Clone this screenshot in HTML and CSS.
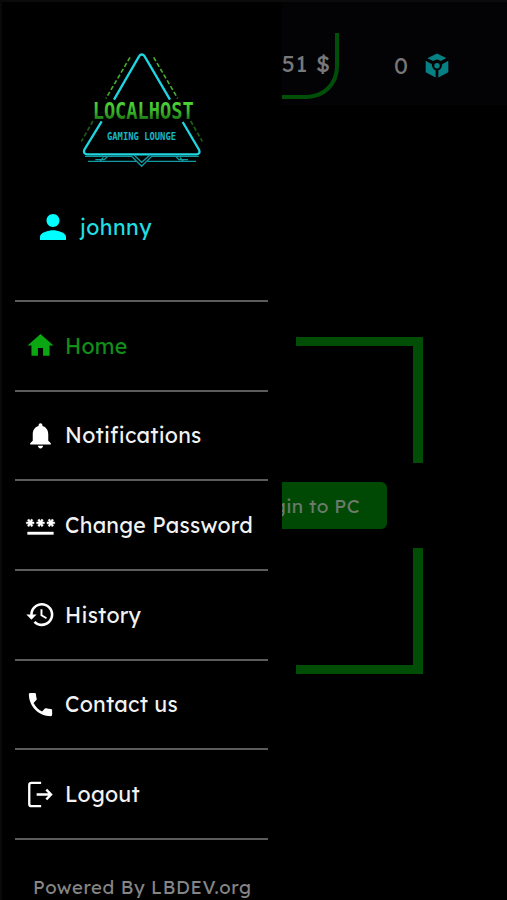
FILE: index.html
```html
<!DOCTYPE html>
<html lang="en">
<head>
<meta charset="utf-8">
<meta name="viewport" content="width=device-width, initial-scale=1">
<title>Localhost Gaming Lounge</title>
<link rel="stylesheet" href="styles.css">
</head>
<body>
<div class="app">
  <header class="topbar">
    <div class="balance">51 $</div>
    <div class="points">
      <span>0</span>
      <svg class="cube" viewBox="0 0 70 72">
        <path class="cube-body" d="M35 1 62 14 46 23Q35 14 24 23L7 15ZM2 22 20 32Q20 45 31 50V71L2 56ZM68 22 50 32Q50 45 39 50V71L68 56Z"/>
        <circle class="cube-body" cx="35" cy="37" r="8"/>
      </svg>
    </div>
  </header>
  <main class="stage">
    <div class="frame">
      <div class="corner top left"></div>
      <div class="corner top right"></div>
      <button class="login">Login to PC</button>
      <div class="corner bottom left"></div>
      <div class="corner bottom right"></div>
    </div>
  </main>
</div>

<aside class="drawer">
  <div class="brand">
    <svg class="logo" viewBox="0 0 435 405">
      <defs>
        <linearGradient id="lime" x1="0" y1="0" x2="0" y2="1">
          <stop offset="0" stop-color="#5be03f"/>
          <stop offset=".55" stop-color="#36b327"/>
          <stop offset="1" stop-color="#0b4e0b"/>
        </linearGradient>
      </defs>
      <g class="neon">
        <path d="M132 179 207 49Q215 38 224 49L300 179"/>
        <path d="M95 244 43 329Q39 342 51 343H380Q392 342 387 329L338 246"/>
      </g>
      <g class="neon-thin">
        <path d="M45 349H185L215 379 245 349H386M192 345 215 367 240 345M54 364H198M233 364H378M76 359H103L113 349M90 364 100 352M354 359H327L317 349M340 364 330 352"/>
      </g>
      <path class="dashes" d="M180 52 108 175M251 52 323 175"/>
      <path class="dashes dim" d="M69 243 34 304M362 243 397 304"/>
      <text class="logo-name" transform="translate(68 236) scale(1 1.12)" textLength="303" lengthAdjust="spacingAndGlyphs">LOCALHOST</text>
      <text class="logo-sub" x="111" y="301" textLength="207" lengthAdjust="spacingAndGlyphs">GAMING LOUNGE</text>
    </svg>
  </div>
  <div class="user">
    <svg class="user-icon" viewBox="4 4 16 16"><path d="M12 12c2.21 0 4-1.79 4-4s-1.79-4-4-4-4 1.790-4 4 1.790 4 4 4zm0 2c-2.670 0-8 1.340-8 4v2h16v-2c0-2.660-5.330-4-8-4z"/></svg>
    <span class="user-name">johnny</span>
  </div>
  <nav class="menu">
    <a class="item active">
      <svg class="icon" viewBox="0 0 24 24"><path d="M10 20v-6h4v6h5v-8h3L12 3 2 12h3v8z"/></svg>
      <span>Home</span>
    </a>
    <a class="item">
      <svg class="icon" viewBox="0 0 24 24"><path d="M12 22c1.100 0 2-.9 2-2h-4c0 1.100.89 2 2 2zm6-6v-5c0-3.070-1.640-5.640-4.500-6.320V4c0-.83-.67-1.500-1.500-1.500s-1.500.67-1.500 1.500v.68C7.630 5.360 6 7.920 6 11v5l-2 2v1h16v-1l-2-2z"/></svg>
      <span>Notifications</span>
    </a>
    <a class="item">
      <svg class="icon wide" viewBox="0 0 24 24"><path class="bold" d="M2 17h20v2H2v-2zm1.150-4.050L4 11.470l.85 1.480 1.300-.75-.85-1.480H7v-1.500H5.300l.85-1.470L4.850 7 4 8.470 3.150 7l-1.300.75.85 1.470H1v1.500h1.700l-.85 1.480 1.300.75zm6.700-.75 1.300.75.85-1.480.85 1.480 1.300-.75-.85-1.480H15v-1.500h-1.700l.85-1.470-1.300-.75L12 8.470 11.150 7l-1.300.75.85 1.470H9v1.500h1.700l-.85 1.480zM23 9.220h-1.700l.85-1.470-1.300-.75L20 8.470 19.150 7l-1.300.75.85 1.470H17v1.500h1.700l-.85 1.480 1.300.75.85-1.480.85 1.480 1.300-.75-.85-1.480H23v-1.500z"/></svg>
      <span>Change Password</span>
    </a>
    <a class="item">
      <svg class="icon" viewBox="0 0 24 24"><path d="M13 3c-4.970 0-9 4.030-9 9H1l3.890 3.890.07.14L9 12H6c0-3.870 3.130-7 7-7s7 3.130 7 7-3.130 7-7 7c-1.930 0-3.680-.79-4.940-2.060l-1.420 1.420C8.270 19.990 10.510 21 13 21c4.970 0 9-4.030 9-9s-4.030-9-9-9zm-1 5v5l4.280 2.540.72-1.210-3.500-2.080V8H12z"/></svg>
      <span>History</span>
    </a>
    <a class="item">
      <svg class="icon" viewBox="0 0 24 24"><path d="M6.620 10.790c1.440 2.830 3.760 5.140 6.590 6.590l2.200-2.200c.27-.27.67-.36 1.020-.24 1.120.37 2.330.57 3.570.57.55 0 1 .45 1 1V20c0 .55-.45 1-1 1-9.390 0-17-7.610-17-17 0-.55.45-1 1-1h3.500c.55 0 1 .45 1 1 0 1.250.2 2.450.57 3.570.11.35.03.74-.25 1.020l-2.200 2.200z"/></svg>
      <span>Contact us</span>
    </a>
    <a class="item">
      <svg class="icon" viewBox="0 0 24 24"><path class="stroke" d="M12.500 3H5Q3.300 3 3.300 4.700V19.300Q3.300 21 5 21H12.500M9 12H20M16.500 8.200 20.200 12 16.500 15.800"/></svg>
      <span>Logout</span>
    </a>
  </nav>
  <footer class="credit">Powered By LBDEV.org</footer>
</aside>
</body>
</html>
```

FILE: styles.css
```css
* { box-sizing: border-box; }

body {
  margin: 0;
  height: 900px;
  position: relative;
  overflow: hidden;
  background: #000;
  color: #f2f2f2;
  font-family: Lexend, Lato, sans-serif;
}

.app {
  height: 900px;
  display: flex;
  flex-direction: column;
  border-top: 2px solid #0b0b0c;
}

.topbar {
  flex: none;
  height: 103px;
  display: flex;
  justify-content: flex-end;
  align-items: flex-start;
  padding: 31px 58px 0 0;
  background: #030306;
  color: #78787a;
  font-size: 23px;
}

.balance {
  width: 168px;
  height: 66px;
  padding: 16px 4px 0 0;
  text-align: right;
  line-height: 30px;
  letter-spacing: 1px;
  border-right: 4px solid #004f08;
  border-bottom: 4px solid #004f08;
  border-radius: 0 0 32px 0;
}

.points {
  display: flex;
  align-items: center;
  gap: 17px;
  height: 30px;
  margin: 18px 0 0 55px;
  line-height: 30px;
}

.cube { width: 24px; height: 25px; margin-top: -2px; }
.cube-body { fill: #078083; }

.stage {
  flex: 1;
  padding: 232px 84px 0;
}

.frame {
  width: 339px;
  height: 337px;
  display: grid;
  grid-template-columns: 127px 127px;
  grid-template-rows: 126px 47px 126px;
  justify-content: space-between;
  align-content: space-between;
}

.corner { border: 0 solid #004e06; }
.top { border-top-width: 9px; }
.bottom { border-bottom-width: 9px; }
.left { border-left-width: 10px; }
.right { border-right-width: 10px; }

.login {
  grid-column: 1 / 3;
  justify-self: center;
  width: 267px;
  border: 0;
  border-radius: 6px;
  padding: 0 27px 0 0;
  background: #004905;
  color: #6c7a6a;
  font: inherit;
  font-size: 19px;
  letter-spacing: .35px;
  text-align: right;
}

.drawer {
  position: absolute;
  top: 0;
  left: 0;
  width: 282px;
  height: 900px;
  display: flex;
  flex-direction: column;
  padding: 0 14px 0 13px;
  border-left: 2px solid #090909;
  border-top: 2px solid #0b0b0c;
  background: #000;
}

.brand { height: 173px; padding: 38px 0 0 55px; }
.logo { display: block; width: 145px; height: 135px; }
.neon { fill: none; stroke: #1fd6e0; stroke-width: 7; }
.neon-thin { fill: none; stroke: #129aa2; stroke-width: 4; }
.dashes { fill: none; stroke: #46ac2c; stroke-width: 5; stroke-dasharray: 13 7; }
.dim { stroke: #1e5c16; }
.logo-name { font: bold 61px "DejaVu Sans Mono", monospace; fill: url(#lime); }
.logo-sub { font: bold 33px "DejaVu Sans Mono", monospace; fill: #18b8c2; }

.user {
  height: 125px;
  display: flex;
  align-items: flex-start;
  gap: 14px;
  padding: 39px 0 0 25px;
  color: #1fdfe5;
  font-size: 21.3px;
}
.user-icon { width: 26px; height: 26px; fill: #00ffff; }
.user-name { line-height: 26px; letter-spacing: .5px; }

.menu { border-bottom: 2px solid #5c5c5c; }
.item {
  height: 89.7px;
  display: flex;
  align-items: center;
  gap: 9px;
  padding-left: 10px;
  border-top: 2px solid #5c5c5c;
  font-size: 21.3px;
  letter-spacing: .25px;
  white-space: nowrap;
}
.icon { width: 31px; height: 31px; flex: none; fill: #fff; }
.wide { width: 33px; margin: 0 -1px; }
.bold { stroke: #fff; stroke-width: .3; }
.stroke { fill: none; stroke: #fff; stroke-width: 1.8; }
.active { color: #118f18; }
.active .icon { fill: #0ba713; }

.credit {
  margin: 34px 0 0 18px;
  color: #858585;
  font-size: 18.5px;
  line-height: 26px;
  letter-spacing: .62px;
  white-space: nowrap;
}
```
